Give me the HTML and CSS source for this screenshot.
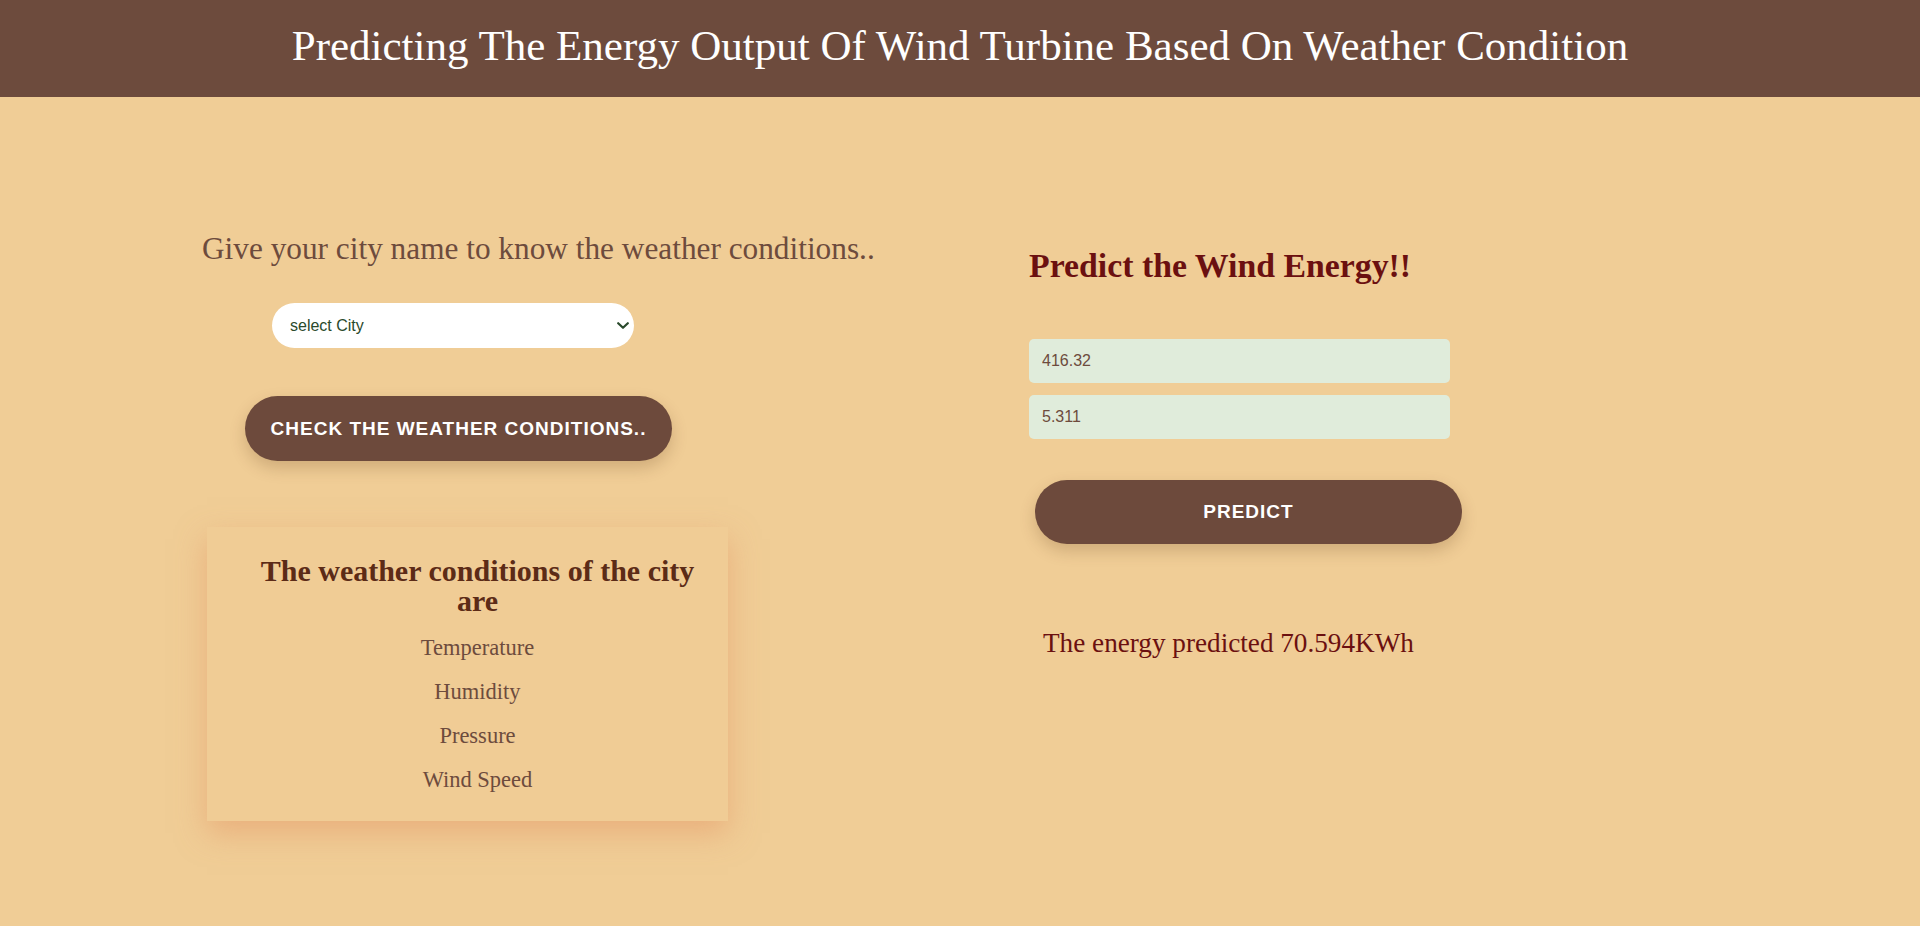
FILE: index.html
```html
<!DOCTYPE html>
<html lang="en">
<head>
<meta charset="utf-8">
<title>Wind Energy Prediction</title>
<link rel="stylesheet" href="styles.css">
</head>
<body>
<header class="topbar">
  <h1 class="topbar-title">Predicting The Energy Output Of Wind Turbine Based On Weather Condition</h1>
</header>
<main class="content">
  <section class="city-panel">
    <h2 class="city-title">Give your city name to know the weather conditions..</h2>
    <div class="select-wrap">
      <select class="city-select">
        <option>select City</option>
      </select>
      <svg class="select-arrow" width="12" height="8" viewBox="0 0 12 8" aria-hidden="true">
        <path d="M1.2 1.2 L6 5.8 L10.8 1.2" fill="none" stroke="#2a4a2c" stroke-width="2.2" stroke-linecap="round" stroke-linejoin="round"/>
      </svg>
    </div>
    <button class="btn btn-check" type="button">Check the weather conditions..</button>
    <div class="weather-card">
      <h3 class="card-title">The weather conditions of the city are</h3>
      <div class="card-list">
        <p class="card-item">Temperature</p>
        <p class="card-item">Humidity</p>
        <p class="card-item">Pressure</p>
        <p class="card-item">Wind Speed</p>
      </div>
    </div>
  </section>
  <section class="predict-panel">
    <h2 class="predict-title">Predict the Wind Energy!!</h2>
    <input class="field field-first" type="text" value="416.32">
    <input class="field field-second" type="text" value="5.311">
    <button class="btn btn-predict" type="button">Predict</button>
    <p class="result">The energy predicted 70.594KWh</p>
  </section>
</main>
</body>
</html>
```
FILE: styles.css
```css
* {
  box-sizing: border-box;
}

html, body {
  margin: 0;
  padding: 0;
}

body {
  background: #f0cd96;
  min-height: 926px;
  font-family: "Liberation Serif", "Times New Roman", serif;
}

.topbar {
  height: 97px;
  background: #6d4b3d;
  display: flex;
  align-items: center;
  justify-content: center;
}

.topbar-title {
  margin: 0;
  padding-bottom: 6px;
  font-family: "Liberation Serif", "Times New Roman", serif;
  font-weight: normal;
  font-size: 43px;
  line-height: 50px;
  color: #ffffff;
}

.content {
  display: flex;
  padding-left: 202px;
}

.city-panel {
  width: 827px;
  display: flex;
  flex-direction: column;
  align-items: flex-start;
}

.city-title {
  margin: 134px 0 0 0;
  font-weight: normal;
  font-size: 31.3px;
  line-height: 36px;
  color: #6d4b3d;
  white-space: nowrap;
}

.select-wrap {
  position: relative;
  margin: 36px 0 0 70px;
  width: 362px;
  height: 45px;
}

.city-select {
  -webkit-appearance: none;
  appearance: none;
  width: 100%;
  height: 100%;
  border: none;
  border-radius: 23px;
  background: #ffffff;
  padding: 0 30px 0 18px;
  font-family: "Liberation Sans", Arial, sans-serif;
  font-size: 16px;
  color: #2a4a2c;
  outline: none;
}

.select-arrow {
  position: absolute;
  right: 5px;
  top: 19px;
  pointer-events: none;
}

.btn {
  border: none;
  background: #6d4a3c;
  color: #ffffff;
  font-family: "Liberation Sans", Arial, sans-serif;
  font-weight: bold;
  font-size: 19px;
  letter-spacing: 1px;
  text-transform: uppercase;
  width: 427px;
  border-radius: 33px;
  box-shadow: 0 7px 16px rgba(90, 55, 25, 0.22);
  cursor: pointer;
}

.btn-check {
  height: 65px;
  margin: 48px 0 0 43px;
}

.weather-card {
  margin: 66px 0 0 5px;
  width: 521px;
  padding: 29px 20px 28px 40px;
  background: #f0cc95;
  box-shadow: 0 12px 28px rgba(228, 148, 100, 0.5);
  text-align: center;
}

.card-title {
  margin: 0;
  font-weight: bold;
  font-size: 30px;
  line-height: 29.5px;
  color: #5c2b17;
}

.card-list {
  margin-top: 19px;
  display: flex;
  flex-direction: column;
  gap: 17px;
}

.card-item {
  margin: 0;
  font-size: 22.5px;
  line-height: 27px;
  color: #6d4b3d;
}

.predict-panel {
  display: flex;
  flex-direction: column;
  align-items: flex-start;
}

.predict-title {
  margin: 148.6px 0 0 0;
  font-weight: bold;
  font-size: 33.8px;
  line-height: 40px;
  color: #6b1010;
  white-space: nowrap;
}

.field {
  width: 421px;
  height: 44px;
  border: none;
  border-radius: 5px;
  background: #e0ecdb;
  padding: 0 13px;
  font-family: "Liberation Sans", Arial, sans-serif;
  font-size: 16px;
  color: #6d4b3d;
  outline: none;
}

.field-first {
  margin-top: 53.4px;
}

.field-second {
  margin-top: 12px;
}

.btn-predict {
  height: 64px;
  margin: 41px 0 0 6px;
}

.result {
  margin: 81.8px 0 0 14px;
  font-size: 27.2px;
  line-height: 34px;
  color: #6b1010;
  white-space: nowrap;
}
```
